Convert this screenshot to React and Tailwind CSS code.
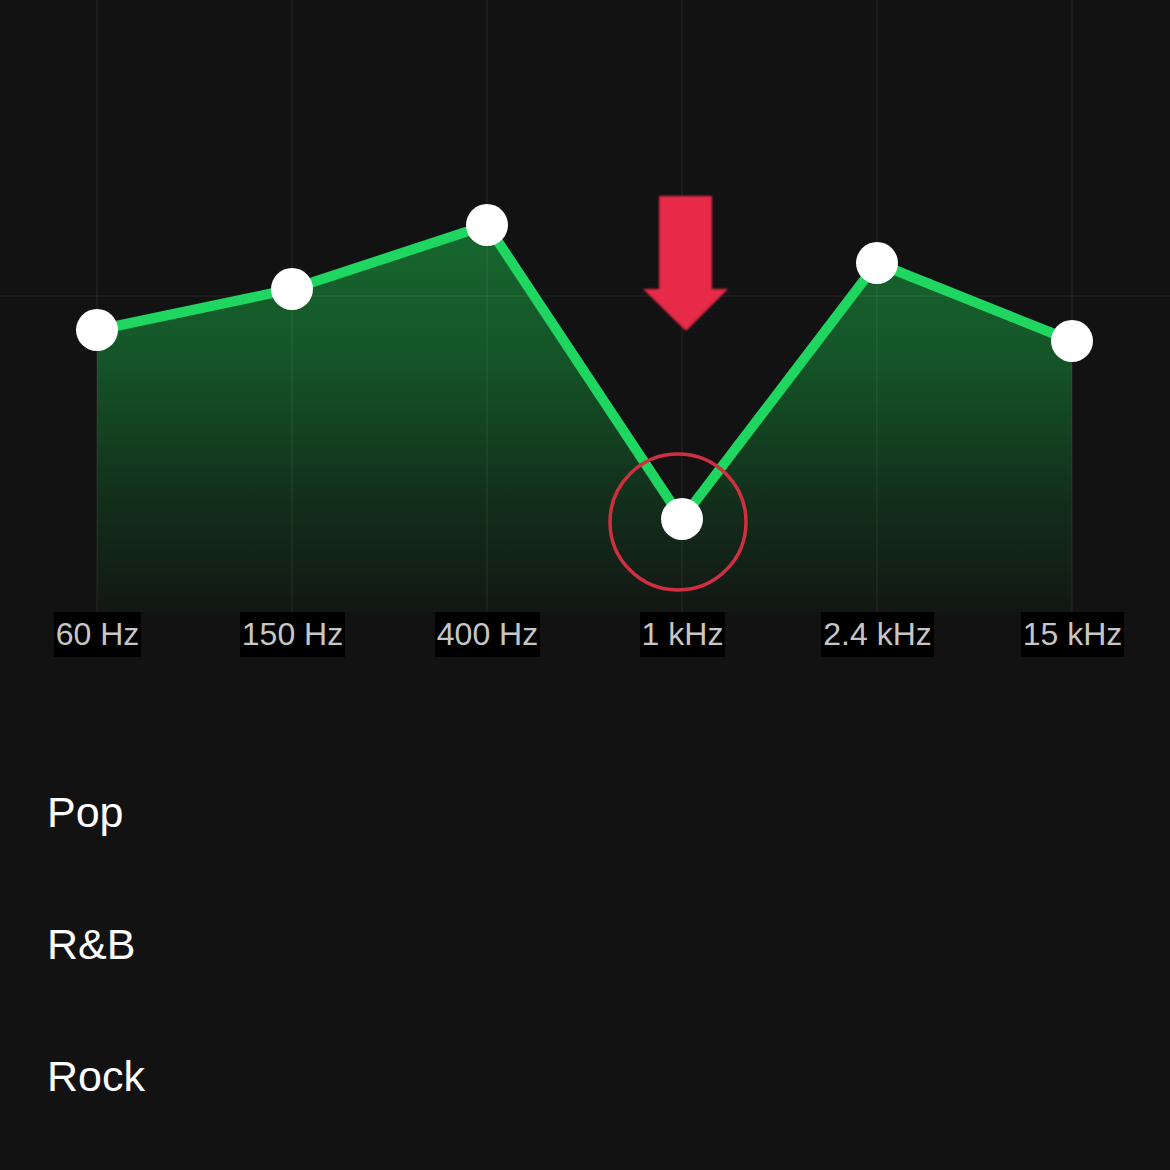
import React from "react";

const pts = [
  [97, 330],
  [292, 289],
  [487, 225],
  [682, 519],
  [877, 263],
  [1072, 341],
];
const labels = ["60 Hz", "150 Hz", "400 Hz", "1 kHz", "2.4 kHz", "15 kHz"];
const presets = ["Pop", "R&B", "Rock"];

function Chart() {
  const line = pts.map((p) => p.join(",")).join(" ");
  const area = `97,612 ${line} 1072,612`;
  const xs = [97, 292, 487, 682, 877, 1072];
  return (
    <svg width="1170" height="612" viewBox="0 0 1170 612" className="block">
      <defs>
        <linearGradient id="fillg" x1="0" y1="225" x2="0" y2="612" gradientUnits="userSpaceOnUse">
          <stop offset="0" stopColor="#17682f" />
          <stop offset="0.35" stopColor="#155428" />
          <stop offset="0.7" stopColor="#12301b" />
          <stop offset="1" stopColor="#121714" />
        </linearGradient>
        <filter id="blur1">
          <feGaussianBlur stdDeviation="0.8" />
        </filter>
      </defs>
      <polygon points={area} fill="url(#fillg)" />
      {xs.map((x) => (
        <line key={x} x1={x} y1="0" x2={x} y2="612" stroke="rgba(255,255,255,0.045)" strokeWidth="2" />
      ))}
      <line x1="0" y1="296" x2="1170" y2="296" stroke="rgba(255,255,255,0.045)" strokeWidth="2" />
      <polyline
        points={line}
        fill="none"
        stroke="#1fd660"
        strokeWidth="10"
        strokeLinejoin="round"
        strokeLinecap="round"
      />
      {pts.map(([x, y]) => (
        <circle key={x} cx={x} cy={y} r="21" fill="#ffffff" />
      ))}
      <polygon
        points="659,196 712,196 712,289 728,289 686,331 643,289 659,289"
        fill="#e62c47"
        filter="url(#blur1)"
      />
      <circle cx="678" cy="522" r="68" fill="none" stroke="#cf2f41" strokeWidth="3.5" />
    </svg>
  );
}

export default function App() {
  return (
    <div
      className="w-[1170px] h-[1170px] bg-[#121212] overflow-hidden"
      style={{ fontFamily: '"Liberation Sans", Arial, sans-serif' }}
    >
      <Chart />
      <div className="grid grid-cols-6 h-[45px]">
        {labels.map((l) => (
          <div key={l} className="flex justify-center">
            <span className="bg-black text-[#c6c6c6] text-[32px] leading-[45px] px-[2px] whitespace-nowrap">
              {l}
            </span>
          </div>
        ))}
      </div>
      <div className="flex flex-col gap-[80px] pt-[129px] pl-[47px]">
        {presets.map((p) => (
          <div key={p} className="text-white text-[43px] leading-[52px]">
            {p}
          </div>
        ))}
      </div>
    </div>
  );
}
